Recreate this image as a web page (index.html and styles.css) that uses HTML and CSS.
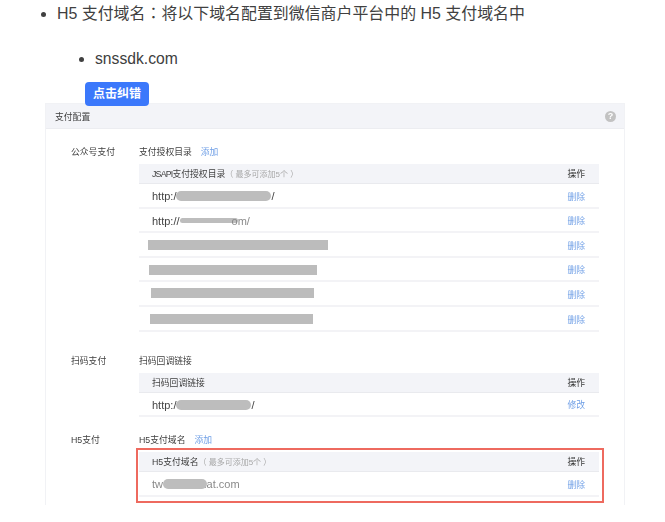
FILE: index.html
```html
<!DOCTYPE html>
<html lang="zh-CN">
<head>
<meta charset="utf-8">
<title>H5 支付域名</title>
<link rel="stylesheet" href="styles.css">
</head>
<body>
<ul class="list">
  <li>H5 支付域名<span class="colon" lang="zh-TW">：</span>将以下域名配置到微信商户平台中的 H5 支付域名中
    <ul class="sublist"><li>snssdk.com</li></ul>
  </li>
</ul>
<button class="fix-btn" type="button">点击纠错</button>
<div class="panel">
  <div class="panel-head"><span>支付配置</span><span class="help">?</span></div>
  <section class="group first">
    <div class="label">公众号支付</div>
    <div class="content">
      <div class="title">支付授权目录<a class="link">添加</a></div>
      <div class="table">
        <div class="row head"><span><span class="tight">JSAPI</span>支付授权目录<em>（ 最多可添加5个 ）</em></span><b>操作</b></div>
        <div class="row"><span class="cell">http:/<i class="blob b1"></i>/</span><a class="link">删除</a></div>
        <div class="row"><span class="cell">http://<i class="blob b2"></i><span class="faint">om/</span></span><a class="link">删除</a></div>
        <div class="row"><i class="bar bar1"></i><a class="link">删除</a></div>
        <div class="row"><i class="bar bar2"></i><a class="link">删除</a></div>
        <div class="row"><i class="bar bar3"></i><a class="link">删除</a></div>
        <div class="row"><i class="bar bar4"></i><a class="link">删除</a></div>
      </div>
    </div>
  </section>
  <section class="group second">
    <div class="label">扫码支付</div>
    <div class="content">
      <div class="title">扫码回调链接</div>
      <div class="table">
        <div class="row head"><span>扫码回调链接</span><b>操作</b></div>
        <div class="row"><span class="cell">http:/<i class="blob b3"></i>/</span><a class="link">修改</a></div>
      </div>
    </div>
  </section>
  <section class="group third">
    <div class="label">H5支付</div>
    <div class="content">
      <div class="title">H5支付域名<a class="link">添加</a></div>
      <div class="highlight">
        <div class="table">
          <div class="row head"><span>H5支付域名<em>（ 最多可添加5个 ）</em></span><b>操作</b></div>
          <div class="row"><span class="cell faint">tw<i class="blob b4"></i>chat.com</span><a class="link">删除</a></div>
        </div>
      </div>
    </div>
  </section>
</div>
</body>
</html>
```
FILE: styles.css
```css
* { box-sizing: border-box; }
html, body { margin: 0; padding: 0; background: #fff; }
body {
  font-family: "Liberation Sans", "Noto Sans CJK SC", sans-serif;
  color: #404040;
  overflow: hidden;
}
.list {
  margin: 0;
  padding: 1px 0 0 57px;
  font-size: 15.93px;
  line-height: 26px;
}
.colon { font-family: "Noto Sans CJK TC", sans-serif; line-height: 0; }
.sublist {
  margin: 19px 0 0;
  padding: 0 0 0 38px;
  list-style: disc;
  font-size: 15.7px;
}
.fix-btn {
  display: block;
  position: relative;
  z-index: 1;
  width: 64px;
  height: 24px;
  margin: 10px 0 0 85px;
  padding: 0;
  border: 0;
  border-radius: 4px;
  background: #3b78fb;
  color: #fff;
  font: bold 12px/24px "Liberation Sans", "Noto Sans CJK SC", sans-serif;
}
.panel {
  width: 580px;
  margin: -3px 0 0 45px;
  padding-bottom: 2px;
  border: 1px solid #f1f2f5;
  border-bottom: 0;
  font-size: 8.8px;
  filter: blur(0.55px);
  color: #3e3e3e;
}
.panel-head {
  display: flex;
  justify-content: space-between;
  align-items: center;
  height: 25px;
  padding: 0 8px 0 9px;
  background: #f3f4f8;
  border-bottom: 1px solid #ecedf1;
}
.help {
  width: 11px;
  height: 11px;
  border-radius: 50%;
  background: #c2c2c2;
  color: #fff;
  font-size: 9px;
  font-weight: bold;
  line-height: 11px;
  text-align: center;
}
.group {
  display: grid;
  grid-template-columns: 68px 460px;
  padding-left: 25px;
}
.first { margin-top: 13px; }
.second { margin-top: 19px; }
.third { margin-top: 13px; }
.label, .title {
  height: 20px;
  line-height: 20px;
}
.title { margin-bottom: 2px; }
.title .link { margin-left: 9px; }
.link { color: #6f9fe6; }
.table { width: 460px; }
.row {
  display: flex;
  justify-content: space-between;
  align-items: center;
  height: 24.6px;
  padding: 1.5px 14px 0 13px;
  border-bottom: 2px solid #f3f3f6;
}
.row.head {
  height: 20px;
  padding-top: 0;
  background: #f3f4f8;
  border-bottom: 1px solid #e9eaee;
}
.row b { font-weight: normal; color: #333; }
.row em { font-style: normal; font-size: 8px; color: #a8a8a8; }
.tight { letter-spacing: -0.8px; }
.cell { display: flex; align-items: center; font-size: 11px; color: #444; }
.cell.faint, .faint { color: #8a8a8a; }
.blob {
  display: block;
  height: 10px;
  border-radius: 5px;
  background: #bdbdbd;
}
.b1 { width: 95px; }
.b2 { width: 58px; height: 5px; margin-right: -6px; }
.b3 { width: 75px; }
.b4 { width: 44px; margin-right: -12px; position: relative; }
.row:has(.bar) { padding-left: 0; }
.bar {
  display: block;
  height: 9.5px;
  background: #bcbcbc;
}
.bar1 { width: 180px; margin-left: 9px; }
.bar2 { width: 168px; margin-left: 10px; }
.bar3 { width: 163px; margin-left: 12px; margin-bottom: 3px; }
.bar4 { width: 163px; margin-left: 11px; }
.highlight {
  width: 468px;
  margin: -4px 0 0 -3px;
  padding: 2px 3px 4px 1px;
  border: 2px solid #ee6a5f;
}
```
